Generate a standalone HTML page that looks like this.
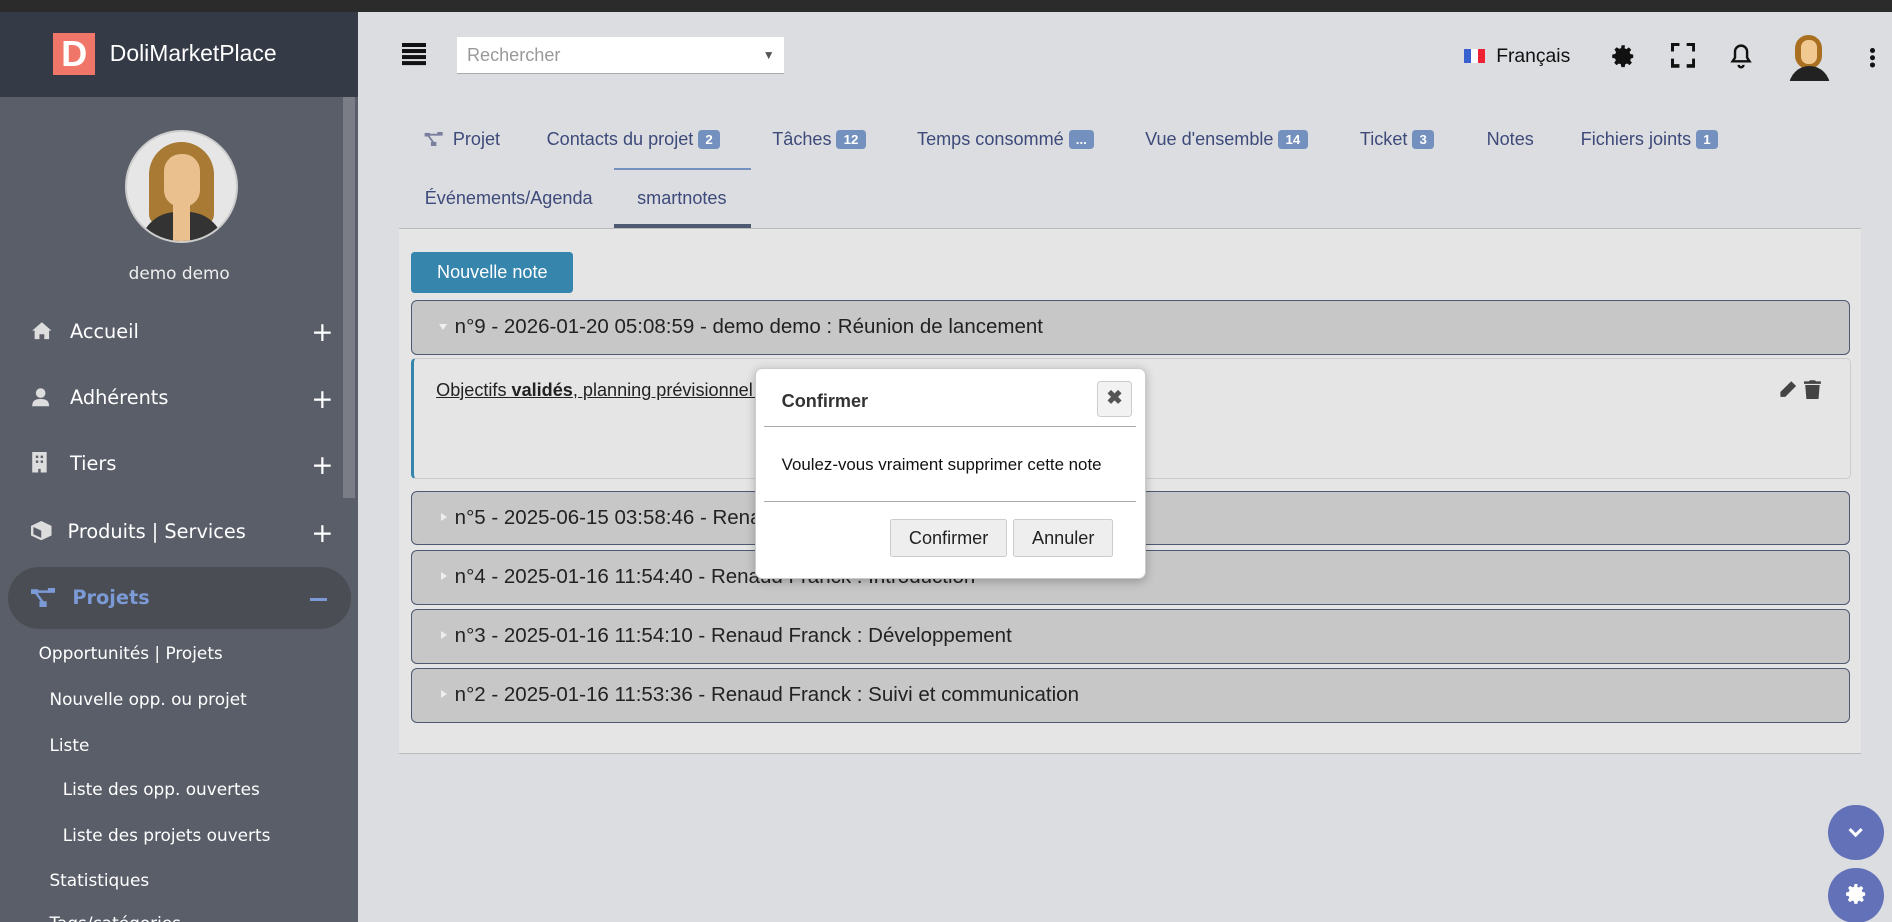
<!DOCTYPE html>
<html><head><meta charset="utf-8">
<style>
html,body{margin:0;padding:0;width:1892px;height:922px;overflow:hidden;background:#dcdde1}
#w{zoom:1.20663;width:1568px;height:764px;position:relative;font-family:"Liberation Sans",sans-serif;background:#dcdde1;overflow:hidden}
.abs{position:absolute}
#top{left:0;top:0;width:1568px;height:10px;background:#2b2b2b}
#sbh{left:0;top:10px;width:297px;height:70px;background:#343a46}
#sb{left:0;top:80px;width:297px;height:684px;background:#5a5e68;color:#fff;font-family:"DejaVu Sans",sans-serif}
.mi{position:absolute;left:26px;font-size:16px;color:#fff}
.mi span{display:inline-block;width:32px;vertical-align:-2px}
.plus{position:absolute;left:258px;font-size:22px;color:#fff}
.sub{position:absolute;font-size:14px;color:#fff}
.tab{position:absolute;top:107px;font-size:15px;color:#3d4a7a}
.bd{display:inline-block;background:#7390be;color:#fff;font-size:11px;font-weight:bold;padding:2px 6px;border-radius:3px;margin-left:4px;vertical-align:1px}
.acc{position:absolute;left:341px;width:1192px;height:45px;background:#c7c7c7;border:1px solid #4e5a72;border-radius:5px;font-size:17px;color:#222;box-sizing:border-box;line-height:43px;padding-left:35px}
.acc:before{content:"";position:absolute;left:24px;top:17px;border-left:5px solid #eee;border-top:4px solid transparent;border-bottom:4px solid transparent}
.acc.open:before{left:22px;top:19px;border-top:5px solid #eee;border-left:4px solid transparent;border-right:4px solid transparent;border-bottom:0}
</style></head><body><div id="w">
<div class="abs" id="top"></div>
<div class="abs" id="sbh">
 <div class="abs" style="left:44px;top:17px;width:35px;height:35px;background:#f0766a;color:#fff;font-weight:bold;font-size:30px;text-align:center;line-height:35px">D</div>
 <div class="abs" style="left:91px;top:23px;color:#fff;font-size:19px">DoliMarketPlace</div>
</div>
<div class="abs" id="sb">
 <div class="abs" style="left:284px;top:0;width:10px;height:333px;background:#7a7d86"></div>
 <div class="abs" style="left:104px;top:28px;width:90px;height:90px;border-radius:50%;background:#e6e6e6;border:2px solid #ccc;overflow:hidden">
  <div class="abs" style="left:18px;top:8px;width:54px;height:70px;border-radius:27px 27px 10px 10px;background:#a87a33"></div>
  <div class="abs" style="left:30px;top:18px;width:30px;height:44px;border-radius:14px;background:#e9c08e"></div>
  <div class="abs" style="left:10px;top:66px;width:70px;height:40px;border-radius:30px 30px 0 0;background:#333"></div>
  <div class="abs" style="left:38px;top:60px;width:14px;height:40px;background:#e9c08e"></div>
 </div>
 <div class="abs" style="left:0;width:297px;top:138px;text-align:center;font-size:14px;color:#eee">demo demo</div>
 <div class="mi" style="top:185px"><span><svg width="18" height="16" viewBox="0 0 18 16"><path fill="#ddd" d="M9 1L1 8h2v7h4v-4h4v4h4V8h2z"/></svg></span>Accueil</div><div class="plus" style="top:183px">+</div>
 <div class="mi" style="top:240px"><span><svg width="16" height="16" viewBox="0 0 16 16"><circle cx="8" cy="5" r="4" fill="#ddd"/><path fill="#ddd" d="M1 16c0-5 3-6 7-6s7 1 7 6z"/></svg></span>Adhérents</div><div class="plus" style="top:238px">+</div>
 <div class="mi" style="top:295px"><span><svg width="14" height="17" viewBox="0 0 14 17"><path fill="#ddd" d="M1 0h12v17H8v-3H6v3H1z"/><path fill="#5a5e68" d="M4 3h2v2H4zM8 3h2v2H8zM4 7h2v2H4zM8 7h2v2H8z"/></svg></span>Tiers</div><div class="plus" style="top:293px">+</div>
 <div class="mi" style="top:351px"><span style="width:30px"><svg width="17" height="16" viewBox="0 0 17 16"><path fill="#ddd" d="M8.5 0L17 4v8l-8.5 4L0 12V4z"/><path fill="#5a5e68" d="M2 5l6.5 3v6L2 11z"/></svg></span>Produits | Services</div><div class="plus" style="top:349px">+</div>
 <div class="abs" style="left:7px;top:390px;width:284px;height:51px;border-radius:26px;background:#4a4d53"></div>
 <div class="mi" style="top:406px;color:#7b9ad6;font-weight:bold"><span style="width:34px"><svg width="20" height="16" viewBox="0 0 20 16"><rect x="0" y="1" width="6" height="4" fill="#7b9ad6"/><rect x="14" y="0" width="6" height="4" fill="#7b9ad6"/><rect x="7" y="11" width="6" height="5" fill="#7b9ad6"/><path d="M5 3h10M4 4l6 8" stroke="#7b9ad6" stroke-width="2"/></svg></span>Projets</div><div class="abs" style="left:257px;top:416px;width:14px;height:2px;background:#7b9ad6"></div>
 <div class="sub" style="left:32px;top:453px">Opportunités | Projets</div>
 <div class="sub" style="left:41px;top:491px">Nouvelle opp. ou projet</div>
 <div class="sub" style="left:41px;top:529px">Liste</div>
 <div class="sub" style="left:52px;top:566px">Liste des opp. ouvertes</div>
 <div class="sub" style="left:52px;top:604px">Liste des projets ouverts</div>
 <div class="sub" style="left:41px;top:641px">Statistiques</div>
 <div class="sub" style="left:41px;top:677px">Tags/catégories</div>
</div>
<!-- header -->
<div class="abs" style="left:333px;top:36px;width:20px;height:3px;background:#111;box-shadow:0 5px 0 #111,0 10px 0 #111,0 15px 0 #111"></div>
<div class="abs" style="left:379px;top:31px;width:271px;height:30px;background:#fff;border-bottom:1px solid #aaa;font-size:15px;color:#999;line-height:30px;padding-left:8px;box-sizing:border-box">Rechercher<span style="position:absolute;right:8px;font-size:10px;color:#555">▼</span></div>
<div class="abs" style="left:1213px;top:41px;width:18px;height:11px;background:linear-gradient(90deg,#3a5fcf 33%,#fff 33%,#fff 66%,#e23 66%)"></div>
<div class="abs" style="left:1240px;top:38px;font-size:16px;color:#111">Français</div>
<svg class="abs" style="left:1334px;top:36px" width="22" height="22" viewBox="0 0 24 24"><path fill="#111" d="M12 8a4 4 0 100 8 4 4 0 000-8zm9 5.5v-3l-2.6-.5-.7-1.7 1.5-2.2-2.1-2.1-2.2 1.5-1.7-.7L13.5 2h-3l-.5 2.6-1.7.7-2.2-1.5-2.1 2.1 1.5 2.2-.7 1.7L2 10.5v3l2.6.5.7 1.7-1.5 2.2 2.1 2.1 2.2-1.5 1.7.7.5 2.6h3l.5-2.6 1.7-.7 2.2 1.5 2.1-2.1-1.5-2.2.7-1.7z"/></svg>
<svg class="abs" style="left:1385px;top:36px" width="20" height="20" viewBox="0 0 20 20"><path fill="none" stroke="#111" stroke-width="3" d="M1 7V1h6M13 1h6v6M19 13v6h-6M7 19H1v-6"/></svg>
<svg class="abs" style="left:1433px;top:35px" width="20" height="22" viewBox="0 0 20 22"><path fill="none" stroke="#111" stroke-width="2" d="M3 16h14l-2-3V8a5 5 0 00-10 0v5zM8 19a2 2 0 004 0"/></svg>
<div class="abs" style="left:1483px;top:29px;width:34px;height:38px;overflow:hidden">
 <div class="abs" style="left:5px;top:0;width:22px;height:28px;border-radius:11px;background:#a87020"></div>
 <div class="abs" style="left:10px;top:4px;width:13px;height:20px;border-radius:6px;background:#f0c890"></div>
 <div class="abs" style="left:0;top:26px;width:34px;height:20px;border-radius:17px 17px 0 0;background:#222"></div>
</div>
<div class="abs" style="left:1550px;top:40px;width:4px;height:4px;border-radius:2px;background:#111;box-shadow:0 6px 0 #111,0 12px 0 #111"></div>
<!-- tabs -->
<div class="tab" style="left:351px"><svg width="16" height="12" viewBox="0 0 20 16" style="vertical-align:-1px"><rect x="0" y="1" width="6" height="4" fill="#7a7fa0"/><rect x="14" y="0" width="6" height="4" fill="#7a7fa0"/><rect x="7" y="11" width="6" height="5" fill="#7a7fa0"/><path d="M5 3h10M4 4l6 8" stroke="#7a7fa0" stroke-width="2"/></svg>&nbsp; Projet</div>
<div class="tab" style="left:453px">Contacts du projet<span class="bd">2</span></div>
<div class="abs" style="left:509px;top:139px;width:113px;height:2px;background:#7390be"></div>
<div class="tab" style="left:640px">Tâches<span class="bd">12</span></div>
<div class="tab" style="left:760px">Temps consommé<span class="bd">...</span></div>
<div class="tab" style="left:949px">Vue d'ensemble<span class="bd">14</span></div>
<div class="tab" style="left:1127px">Ticket<span class="bd">3</span></div>
<div class="tab" style="left:1232px">Notes</div>
<div class="tab" style="left:1310px">Fichiers joints<span class="bd">1</span></div>
<div class="tab" style="left:352px;top:156px">Événements/Agenda</div>
<div class="tab" style="left:528px;top:156px">smartnotes</div>
<div class="abs" style="left:509px;top:186px;width:113px;height:4px;background:#4e5a72"></div>
<!-- content -->
<div class="abs" style="left:331px;top:189px;width:1211px;height:434px;background:#e5e5e5;border-top:1px solid #bbb;border-bottom:1px solid #bbb"></div>
<div class="abs" style="left:341px;top:209px;width:134px;height:34px;background:#3585ad;border-radius:3px;color:#fff;font-size:15px;text-align:center;line-height:34px">Nouvelle note</div>
<div class="acc open" style="top:249px">n°9 - 2026-01-20 05:08:59 - demo demo : Réunion de lancement</div>
<div class="abs" style="left:341px;top:297px;width:1193px;height:100px;background:#e5e5e5;border:1px solid #ccc;border-left:3px solid #3585ad;box-sizing:border-box;border-radius:4px">
 <div class="abs" style="left:18px;top:17px;font-size:15px;color:#222;text-decoration:underline;white-space:nowrap">Objectifs <b>validés</b>, planning prévisionnel établi et ressources affectées</div>
 <svg class="abs" style="left:1130px;top:17px" width="16" height="16" viewBox="0 0 16 16"><path fill="#444" d="M11 1l4 4-9 9H2v-4zM2 14h0"/></svg>
 <svg class="abs" style="left:1152px;top:16px" width="14" height="17" viewBox="0 0 14 17"><path fill="#444" d="M0 2h4l1-1h4l1 1h4v2H0zM1 5h12l-1 12H2z"/></svg>
</div>
<div class="acc" style="top:407px">n°5 - 2025-06-15 03:58:46 - Renaud Franck : Kick-off</div>
<div class="acc" style="top:456px">n°4 - 2025-01-16 11:54:40 - Renaud Franck : Introduction</div>
<div class="acc" style="top:505px">n°3 - 2025-01-16 11:54:10 - Renaud Franck : Développement</div>
<div class="acc" style="top:554px">n°2 - 2025-01-16 11:53:36 - Renaud Franck : Suivi et communication</div>
<!-- modal -->
<div class="abs" style="left:626px;top:305px;width:322px;height:173px;background:#fff;border:1px solid #ccc;border-radius:6px;box-shadow:0 2px 8px rgba(0,0,0,.25)">
 <div class="abs" style="left:21px;top:18px;font-size:15px;font-weight:bold;color:#333">Confirmer</div>
 <div class="abs" style="left:282px;top:10px;width:28px;height:28px;border:1px solid #ccc;border-radius:3px;background:#f2f2f2;text-align:center;line-height:28px;font-weight:bold;color:#555">✖</div>
 <div class="abs" style="left:6px;top:47px;width:309px;height:1px;background:#aaa"></div>
 <div class="abs" style="left:21px;top:71px;font-size:14px;color:#111">Voulez-vous vraiment supprimer cette note</div>
 <div class="abs" style="left:6px;top:109px;width:309px;height:1px;background:#aaa"></div>
 <div class="abs" style="left:111px;top:124px;width:95px;height:30px;border:1px solid #ccc;border-radius:2px;background:#eee;font-size:15px;text-align:center;line-height:30px;color:#222">Confirmer</div>
 <div class="abs" style="left:213px;top:124px;width:81px;height:30px;border:1px solid #ccc;border-radius:2px;background:#eee;font-size:15px;text-align:center;line-height:30px;color:#222">Annuler</div>
</div>
<!-- floating -->
<div class="abs" style="left:1515px;top:667px;width:46px;height:46px;border-radius:50%;background:#6372b8"></div>
<svg class="abs" style="left:1530px;top:682px" width="16" height="16" viewBox="0 0 16 16"><path fill="none" stroke="#fff" stroke-width="2.5" d="M3 5l5 5 5-5"/></svg>
<div class="abs" style="left:1515px;top:719px;width:46px;height:46px;border-radius:50%;background:#6372b8"></div>
<svg class="abs" style="left:1528px;top:731px" width="20" height="20" viewBox="0 0 24 24"><path fill="#fff" d="M12 8a4 4 0 100 8 4 4 0 000-8zm9 5.5v-3l-2.6-.5-.7-1.7 1.5-2.2-2.1-2.1-2.2 1.5-1.7-.7L13.5 2h-3l-.5 2.6-1.7.7-2.2-1.5-2.1 2.1 1.5 2.2-.7 1.7L2 10.5v3l2.6.5.7 1.7-1.5 2.2 2.1 2.1 2.2-1.5 1.7.7.5 2.6h3l.5-2.6 1.7-.7 2.2 1.5 2.1-2.1-1.5-2.2.7-1.7z"/></svg>
</div></body></html>
